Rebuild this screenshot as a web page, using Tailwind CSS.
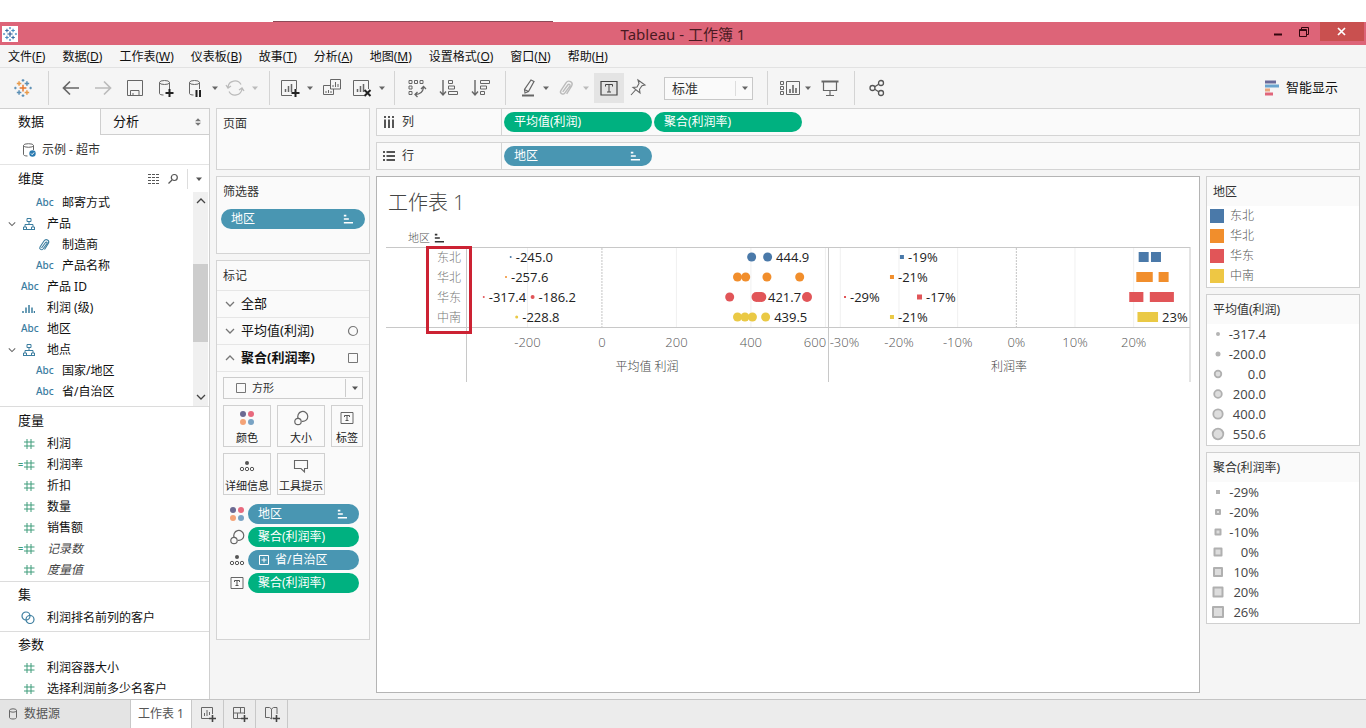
<!DOCTYPE html>
<html lang="zh-CN">
<head>
<meta charset="utf-8">
<title>Tableau - 工作簿 1</title>
<script src="https://cdn.jsdelivr.net/npm/@tailwindcss/browser@4"></script>
</head>
<body class="flex h-screen flex-col overflow-hidden bg-[#f5f5f5] font-['Noto_Sans','Noto_Sans_CJK_SC',sans-serif] text-xs text-[#111]">

<svg class="hidden" aria-hidden="true">
  <symbol id="caret" viewBox="0 0 8 6"><path d="M1 1.5h6L4 5z" fill="currentColor"/></symbol>
  <symbol id="sort" viewBox="0 0 12 12"><path d="M1 2h3M1 6h6M1 10.500h11" stroke="currentColor" stroke-width="2" fill="none"/></symbol>
  <symbol id="hash" viewBox="0 0 12 12"><path d="M4 1v10M8 1v10M1 4h10.500M1 8h10.500" stroke="currentColor" fill="none"/></symbol>
  <symbol id="tree" viewBox="0 0 14 14"><path d="M5 1.500h4v3H5zM7 4.500v3M3 10V7.500h8V10M1.500 10h3v2.500h-3zM9.500 10h3v2.500h-3zM1 12.500h12" stroke="currentColor" fill="none"/></symbol>
  <symbol id="clip" viewBox="0 0 14 14"><path d="M4.500 10 8.500 4.500c.8-1 2.200 0 1.500 1L6 11c-1.300 1.700-4.200 0-3-2L7 3c2-2.800 6-.5 4.300 2.500L7.500 11.500" stroke="currentColor" stroke-width="1.100" fill="none"/></symbol>
  <symbol id="down" viewBox="0 0 10 6"><path d="M1 1l4 4 4-4" stroke="currentColor" stroke-width="1.300" fill="none"/></symbol>
  <symbol id="up" viewBox="0 0 10 6"><path d="M1 5l4-4 4 4" stroke="currentColor" stroke-width="1.300" fill="none"/></symbol>
  <symbol id="colors" viewBox="0 0 16 16"><circle cx="4" cy="4" r="3" fill="#6b6a92"/><circle cx="12" cy="4" r="3" fill="#e8697d"/><circle cx="4" cy="12" r="3" fill="#f4a377"/><circle cx="12" cy="12" r="3" fill="#79a3c4"/></symbol>
  <symbol id="size" viewBox="0 0 16 16"><path d="M5.300 8.700A5 5 0 1 1 9 11.400" stroke="#666" stroke-width="1.200" fill="none"/><circle cx="5" cy="11.500" r="3.200" stroke="#666" stroke-width="1.200" fill="none"/></symbol>
  <symbol id="detail" viewBox="0 0 16 16"><circle cx="8" cy="5" r="2" fill="#555"/><g fill="none" stroke="#555"><circle cx="3" cy="11" r="1.700"/><circle cx="8" cy="11" r="1.700"/><circle cx="13" cy="11" r="1.700"/></g></symbol>
  <symbol id="label" viewBox="0 0 16 16"><path d="M2 2.500h12v11H2z" fill="none" stroke="#666"/><path d="M5.500 7V5.500h5V7M8 5.500v5M6.500 10.500h3" fill="none" stroke="#555"/></symbol>
  <symbol id="tip" viewBox="0 0 16 16"><path d="M1.500 2.500h13v8h-3v3.500L8 10.500H1.500z" fill="none" stroke="#666" stroke-width="1.100"/></symbol>
  <symbol id="cyl" viewBox="0 0 20 20"><path d="M4.500 4.500v11c0 1 2 1.500 4 1.500M14.500 4.500V11" fill="none" stroke="#666"/><ellipse cx="9.500" cy="4.500" rx="5" ry="2" fill="none" stroke="#666"/></symbol>
  <symbol id="mark" viewBox="0 0 16 16"><g stroke-width="1.300"><path d="M8 5v6M5 8h6" stroke="var(--c)"/><path d="M4.500 2v4M2.500 4h4M11.500 10v4M9.500 12h4" stroke="var(--b)"/><path d="M11.500 2v4M9.500 4h4M4.500 10v4M2.500 12h4" stroke="var(--a)"/><path d="M8 0v2.500M6.800 1.200h2.400M8 13.500V16M6.800 14.800h2.400M0 8h2.500M1.200 6.800v2.400M13.500 8H16M14.800 6.800v2.400" stroke="var(--a)" stroke-width="1"/></g></symbol>
</svg>

<div class="flex h-[22px] shrink-0 items-end bg-white"><div class="mx-[20%] h-px w-[280px] bg-[#8d4a58]"></div></div>

<header class="flex h-[23px] shrink-0 items-center bg-[#dd6478]">
  <div class="flex flex-1 pl-0.5"><svg class="size-4 bg-white p-px [--a:#4a8fc0] [--b:#3a6ea5] [--c:#2a5a95]"><use href="#mark"/></svg></div>
  <h1 class="text-[15px] leading-5 text-[#4a1a22]">Tableau - 工作簿 1</h1>
  <div class="flex flex-1 items-start justify-end self-start pr-0.5">
    <button aria-label="最小化" class="flex h-5 w-7 items-center justify-center text-[#33060e]"><svg class="h-3 w-2.5"><path d="M1 8.500h8" stroke="currentColor" stroke-width="2"/></svg></button>
    <button aria-label="还原" class="flex h-5 w-6 items-center justify-center text-[#33060e]"><svg class="size-3" fill="none" stroke="currentColor"><path d="M1.500 3.500h7v7h-7zM1.500 4.500h7M3.500 3V1.500h7v7H9"/></svg></button>
    <button aria-label="关闭" class="ml-1 flex h-[19px] w-11 items-center justify-center bg-[#c9504f] text-white"><svg class="size-2.5"><path d="M1 1l7 7M8 1L1 8" stroke="currentColor" stroke-width="1.700"/></svg></button>
  </div>
</header>

<nav class="flex h-[22px] shrink-0 items-center gap-[17px] px-2 pt-0.5 whitespace-nowrap">
  <button>文件(<u>F</u>)</button><button>数据(<u>D</u>)</button><button>工作表(<u>W</u>)</button><button>仪表板(<u>B</u>)</button><button>故事(<u>T</u>)</button><button>分析(<u>A</u>)</button><button>地图(<u>M</u>)</button><button>设置格式(<u>O</u>)</button><button>窗口(<u>N</u>)</button><button>帮助(<u>H</u>)</button>
</nav>

<div class="flex h-[41px] shrink-0 items-center border-t border-[#e2e2e2] pl-3.5 text-[#666]">
  <button aria-label="开始页"><svg class="size-[18px] [--a:#5b8fb5] [--b:#e89a4a] [--c:#e8762c]"><use href="#mark"/></svg></button>
  <i class="ml-4 h-[34px] w-px bg-[#d4d4d4]"></i>
  <button aria-label="撤消" class="ml-3"><svg class="size-5" fill="none" stroke="currentColor" stroke-width="1.700"><path d="M18 10H3M9 3.500L2.500 10 9 16.500"/></svg></button>
  <button aria-label="重做" class="ml-3 text-[#bbb]"><svg class="size-5" fill="none" stroke="currentColor" stroke-width="1.700"><path d="M2 10h15M11 3.500l6.500 6.500-6.500 6.500"/></svg></button>
  <button aria-label="保存" class="ml-3"><svg class="size-5" fill="none" stroke="currentColor"><path d="M2.500 2.500h15v15h-15zM5.500 17.500v-5h8.500v5M8 17.500v-2.500"/></svg></button>
  <button aria-label="新建数据源" class="ml-2.5"><svg class="size-5"><use href="#cyl"/><path d="M14.500 11v8M10.500 15h8" stroke="#222" stroke-width="2"/></svg></button>
  <button aria-label="暂停自动更新" class="ml-2.5"><svg class="size-5"><use href="#cyl"/><path d="M11.500 12v7M15 12v7" stroke="#222" stroke-width="2"/></svg></button>
  <svg class="ml-1.5 h-1.5 w-2"><use href="#caret"/></svg>
  <button aria-label="刷新" class="ml-1.5 text-[#bbb]"><svg class="size-5" fill="none" stroke="currentColor" stroke-width="1.300"><path d="M3 9a7 7 0 0 1 13-2.500M17 11a7 7 0 0 1-13 2.500M1 7l2 3 3-2M19 13l-2-3-3 2"/></svg></button>
  <svg class="ml-1.5 h-1.5 w-2 text-[#bbb]"><use href="#caret"/></svg>
  <i class="ml-2.5 h-[34px] w-px bg-[#d4d4d4]"></i>
  <button aria-label="新建工作表" class="ml-2.5"><svg class="size-5" fill="none" stroke="currentColor"><path d="M12 17.500H1.500v-15h15V11"/><path d="M5.500 14V11M8.500 14V8M11.500 14V6" stroke-width="1.500"/><path d="M15.500 11v8M11.500 15h8" stroke="#222" stroke-width="2"/></svg></button>
  <svg class="ml-1.5 h-1.5 w-2"><use href="#caret"/></svg>
  <button aria-label="复制" class="ml-2"><svg class="size-5" fill="none" stroke="currentColor"><path d="M8.500 1.500h10v9.500h-10zM8 7.500H1.500v9h10V11M11 9V7M13.500 9V4M16 9V6M4 15v-2M6.500 15v-3M9 15v-2"/></svg></button>
  <button aria-label="清除工作表" class="ml-2.5"><svg class="size-5" fill="none" stroke="currentColor"><path d="M12 17.500H1.500v-15h15V11"/><path d="M5.500 14V11M8.500 14V8M11.500 14V6" stroke-width="1.500"/><path d="M12.500 12l6 6M18.500 12l-6 6" stroke="#222" stroke-width="2"/></svg></button>
  <svg class="ml-1.5 h-1.5 w-2"><use href="#caret"/></svg>
  <i class="ml-2 h-[34px] w-px bg-[#d4d4d4]"></i>
  <button aria-label="交换行和列" class="ml-3"><svg class="size-5" fill="none" stroke="currentColor"><path d="M2 2.500h3v3H2zM7.500 2.500h3v3h-3zM13 2.500h3v3h-3zM2 8h3v3H2zM2 13.500h3v3H2z"/><path d="M8 16.500c5 0 8-3 8.500-7M14 11l2.500-2.500L19 11M10.500 14L8 16.500l2.500 2.500" stroke-width="1.300"/></svg></button>
  <button aria-label="升序排序" class="ml-3"><svg class="size-5" fill="none" stroke="currentColor"><path d="M4 2v15M1 13.500L4 17l3-3.500" stroke-width="1.400"/><path d="M9.500 2.500h4v3h-4zM9.500 8h6v3h-6zM9.500 13.500h9v3h-9z"/></svg></button>
  <button aria-label="降序排序" class="ml-3"><svg class="size-5" fill="none" stroke="currentColor"><path d="M4 2v15M1 13.500L4 17l3-3.500" stroke-width="1.400"/><path d="M9.500 2.500h9v3h-9zM9.500 8h6v3h-6zM9.500 13.500h4v3h-4z"/></svg></button>
  <i class="ml-3.5 h-[34px] w-px bg-[#d4d4d4]"></i>
  <button aria-label="突出显示" class="ml-3"><svg class="size-5" fill="none" stroke="currentColor"><path d="M13 2l3 1.500-5.500 10L7 15l-.5-3.500zM6.500 11.500l4 2" stroke-width="1.200"/><path d="M4 17.500h12" stroke-width="2"/></svg></button>
  <svg class="ml-1 h-1.5 w-2"><use href="#caret"/></svg>
  <button aria-label="分组成员" class="ml-1.5 text-[#bbb]"><svg class="size-5 p-px"><use href="#clip"/></svg></button>
  <svg class="ml-1.5 h-1.5 w-2 text-[#bbb]"><use href="#caret"/></svg>
  <button aria-label="显示标记标签" class="ml-1 flex h-[30px] w-[30px] items-center justify-center bg-[#e4e4e4]"><svg class="size-5" fill="none" stroke="#444"><path d="M2 3.500h16v13.500H2z" stroke-width="1.200"/><path d="M6.500 8.500v-2h7v2M10 6.500v7.500M8 14h4"/></svg></button>
  <button aria-label="固定轴" class="ml-1"><svg class="size-5" fill="none" stroke="currentColor" stroke-width="1.100"><path d="M10 2l7 5-3 .8-2.500 3.500.5 3.700-7-5.500 4-.5L11 5.500zM7.500 12L3 17"/></svg></button>
  <div class="relative ml-4 flex">
    <select aria-label="适合" class="h-[23px] w-[89px] appearance-none border border-[#c8c8c8] bg-[#fafafa] px-[7px] text-[13px] leading-5 text-[#333]"><option>标准</option></select>
    <span class="pointer-events-none absolute inset-y-1 right-0 flex w-[18px] items-center justify-center border-l border-[#ddd]"><svg class="h-1.5 w-2"><use href="#caret"/></svg></span>
  </div>
  <i class="ml-3.5 h-[34px] w-px bg-[#d4d4d4]"></i>
  <button aria-label="显示/隐藏卡" class="ml-3"><svg class="size-5" fill="none" stroke="currentColor"><path d="M.5 3.500h3v3h-3zM.5 8.500h3v3h-3zM.5 13.500h3v3h-3zM6.500 3.500h13v13h-13z"/><path d="M10 15v-4M13 15V7M16 15v-5" stroke-width="1.600"/></svg></button>
  <svg class="ml-1 h-1.5 w-2"><use href="#caret"/></svg>
  <button aria-label="演示模式" class="ml-2"><svg class="size-5" fill="none" stroke="currentColor"><path d="M1.500 3.500h17" stroke-width="2"/><path d="M3.500 4v8.500h13V4M10 12.500v5M6 17.500h8" stroke-width="1.200"/></svg></button>
  <i class="ml-3.5 h-[34px] w-px bg-[#d4d4d4]"></i>
  <button aria-label="共享" class="ml-3"><svg class="size-5" fill="none" stroke="#555" stroke-width="1.300"><circle cx="5.500" cy="10" r="2.500"/><circle cx="14" cy="5" r="2.500"/><circle cx="14" cy="15" r="2.500"/><path d="M7.700 8.700l4-2.400M7.700 11.300l4 2.400"/></svg></button>
  <button class="mr-7 ml-auto flex items-center gap-1.5 text-[13px] text-[#111]"><svg class="size-4"><path d="M1 2h11" stroke="#6a6a9a" stroke-width="3"/><path d="M1 6h14" stroke="#6aa5cf" stroke-width="3"/><path d="M1 10h5" stroke="#eaa57c" stroke-width="3"/><path d="M1 14h8" stroke="#e0657a" stroke-width="3"/></svg>智能显示</button>
</div>

<main class="flex min-h-0 flex-1">
  <aside class="flex w-[210px] shrink-0 flex-col overflow-hidden border-t border-r border-[#cfcfcf] bg-white">
    <div class="flex h-[26px] shrink-0 text-[13px]">
      <button class="w-[100px] pl-[18px] text-left">数据</button>
      <button class="flex flex-1 items-center justify-between border-b border-l border-[#cfcfcf] bg-[#f8f8f8] pr-2 pl-3"><span>分析</span><svg class="h-2 w-1.5" fill="#777"><path d="M0 3.300h6L3 .3zM0 4.700h6l-3 3z"/></svg></button>
    </div>
    <div class="flex h-[30px] shrink-0 items-center gap-1.5 border-b border-[#e4e4e4] pl-[22px] text-[#333]"><svg class="size-3.5" fill="none" stroke="#666"><path d="M1.500 2.500v9c0 .8 1.500 1.500 4 1.500M11.500 2.500V7"/><ellipse cx="6.500" cy="2.500" rx="5" ry="1.800"/><circle cx="10.500" cy="10.500" r="3.200" fill="#2a7ab0" stroke="none"/><path d="M9 10.500l1.200 1.200L12 9.500" stroke="#fff"/></svg>示例 - 超市</div>
    <div class="flex h-[27px] shrink-0 items-center pl-[18px] text-[13px] text-[#111]"><h2 class="flex-1">维度</h2>
      <button aria-label="查看数据" class="mr-1.5"><svg class="h-3 w-3.5" stroke="#555" stroke-dasharray="3 1"><path d="M1 1.500h12M1 4.500h12M1 7.500h12M1 10.500h12"/></svg></button>
      <button aria-label="查找字段" class="mr-2"><svg class="size-3" fill="none" stroke="#555" stroke-width="1.200"><circle cx="7.300" cy="4.500" r="3"/><path d="M5 7L1.500 10.500"/></svg></button>
      <button aria-label="菜单" class="flex h-5 w-[22px] items-center justify-center border-l border-[#ddd] text-[#555]"><svg class="h-1.5 w-2"><use href="#caret"/></svg></button>
    </div>
    <div class="flex h-[215px] shrink-0 border-b border-[#dcdcdc]">
      <ul class="flex-1 [&>li]:flex [&>li]:h-[21px] [&>li]:items-center">
        <li><b class="ml-9 w-[26px] text-[10px] font-medium text-[#3b7d9f]">Abc</b>邮寄方式</li>
        <li><svg class="mr-1.5 ml-2 h-1.5 w-2 text-[#666]"><use href="#down"/></svg><svg class="mr-[11px] size-3.5 text-[#3b7d9f]"><use href="#tree"/></svg>产品</li>
        <li><svg class="mr-[11px] ml-[37px] size-3.5 text-[#3b7d9f]"><use href="#clip"/></svg>制造商</li>
        <li><b class="ml-9 w-[26px] text-[10px] font-medium text-[#3b7d9f]">Abc</b>产品名称</li>
        <li><b class="ml-[21px] w-[26px] text-[10px] font-medium text-[#3b7d9f]">Abc</b>产品 ID</li>
        <li><svg class="mr-3 ml-[22px] h-3 w-[13px]" stroke="#3b7d9f" stroke-width="1.500"><path d="M1 11V9M4 11V5.500M7 11V3M10 11V5.500M12.500 11V9"/></svg>利润 (级)</li>
        <li><b class="ml-[21px] w-[26px] text-[10px] font-medium text-[#3b7d9f]">Abc</b>地区</li>
        <li><svg class="mr-1.5 ml-2 h-1.5 w-2 text-[#666]"><use href="#down"/></svg><svg class="mr-[11px] size-3.5 text-[#3b7d9f]"><use href="#tree"/></svg>地点</li>
        <li><b class="ml-9 w-[26px] text-[10px] font-medium text-[#3b7d9f]">Abc</b>国家/地区</li>
        <li><b class="ml-9 w-[26px] text-[10px] font-medium text-[#3b7d9f]">Abc</b>省/自治区</li>
      </ul>
      <div class="mr-px flex w-[15px] flex-col items-center bg-[#f0f0f0] py-1.5 text-[#444]"><svg class="h-1.5 w-2.5"><use href="#up"/></svg><i class="mt-[60px] h-[78px] w-full bg-[#cdcdcd]"></i><svg class="mt-auto h-1.5 w-2.5"><use href="#down"/></svg></div>
    </div>
    <h2 class="h-[26px] shrink-0 pl-[18px] text-[13px] leading-[26px]">度量</h2>
    <ul class="h-[149px] shrink-0 border-b border-[#dcdcdc] [&_svg]:mr-3 [&_svg]:size-3 [&_svg]:text-[#3f9c7b] [&>li]:flex [&>li]:h-[21px] [&>li]:items-center">
      <li class="pl-[23px]"><svg><use href="#hash"/></svg>利润</li>
      <li class="pl-[18px]"><span class="w-[5px] text-[9px] font-bold text-[#3f9c7b]">=</span><svg><use href="#hash"/></svg>利润率</li>
      <li class="pl-[23px]"><svg><use href="#hash"/></svg>折扣</li>
      <li class="pl-[23px]"><svg><use href="#hash"/></svg>数量</li>
      <li class="pl-[23px]"><svg><use href="#hash"/></svg>销售额</li>
      <li class="pl-[18px] text-[#444]"><span class="w-[5px] text-[9px] font-bold text-[#3f9c7b]">=</span><svg><use href="#hash"/></svg><em>记录数</em></li>
      <li class="pl-[23px] text-[#444]"><svg><use href="#hash"/></svg><em>度量值</em></li>
    </ul>
    <h2 class="h-[25px] shrink-0 pl-[18px] text-[13px] leading-[25px]">集</h2>
    <div class="flex h-[25px] shrink-0 items-center border-b border-[#dcdcdc] pb-0.5 pl-[21px]"><svg class="mr-3 size-3.5" fill="none" stroke="#3b7d9f" stroke-width="1.200"><circle cx="5" cy="5" r="4"/><circle cx="9" cy="8.500" r="4"/></svg>利润排名前列的客户</div>
    <h2 class="h-[25px] shrink-0 pl-[18px] text-[13px] leading-[25px]">参数</h2>
    <ul class="shrink-0 [&_svg]:mr-3 [&_svg]:size-3 [&_svg]:text-[#3f9c7b] [&>li]:flex [&>li]:h-[21px] [&>li]:items-center">
      <li class="pl-[23px]"><svg><use href="#hash"/></svg>利润容器大小</li>
      <li class="pl-[23px]"><svg><use href="#hash"/></svg>选择利润前多少名客户</li>
    </ul>
  </aside>

  <div class="ml-1.5 flex w-[154px] shrink-0 flex-col gap-1.5 text-[#333]">
    <section class="h-[62px] border border-[#d4d4d4] bg-[#fafafa] px-1.5"><h2 class="leading-[29px]">页面</h2></section>
    <section class="h-[78px] border border-[#d4d4d4] bg-[#fafafa] px-1"><h2 class="px-0.5 leading-[29px]">筛选器</h2>
      <div class="mt-[3px] flex h-5 items-center justify-between rounded-full bg-[#4996b2] pr-3 pl-2.5 text-white">地区<svg class="size-2.5"><use href="#sort"/></svg></div>
    </section>
    <section class="h-[380px] border border-[#d4d4d4] bg-[#fafafa]"><h2 class="h-[30px] border-b border-[#e6e6e6] px-1.5 leading-[29px]">标记</h2>
      <button class="flex h-[27px] w-full items-center gap-1.5 border-b border-[#e6e6e6] px-2 text-[13px] text-[#111]"><svg class="h-1.5 w-2.5 text-[#777]"><use href="#down"/></svg>全部</button>
      <button class="flex h-[27px] w-full items-center gap-1.5 border-b border-[#e6e6e6] px-2 text-[13px] text-[#111]"><svg class="h-1.5 w-2.5 text-[#777]"><use href="#down"/></svg>平均值(利润)<svg class="mr-0.5 ml-auto size-3" fill="none" stroke="#777" stroke-width="1.200"><circle cx="6" cy="6" r="4.500"/></svg></button>
      <button class="flex h-[27px] w-full items-center gap-1.5 border-b border-[#e6e6e6] px-2 text-[13px] font-bold text-[#111]"><svg class="h-1.5 w-2.5 text-[#777]"><use href="#up"/></svg>聚合(利润率)<svg class="mr-0.5 ml-auto size-3" fill="none" stroke="#777"><path d="M1.500 1.500h9v9h-9z"/></svg></button>
      <div class="px-1.5 pt-[5px] text-[#222]">
        <div class="relative flex items-center">
          <select aria-label="标记类型" class="h-[22px] w-full appearance-none border border-[#ccc] bg-[#fafafa] pl-7 text-[11px] text-[#333]"><option>方形</option></select>
          <svg class="pointer-events-none absolute left-3 size-3" fill="none" stroke="#777"><path d="M1.500 1.500h9v9h-9z"/></svg>
          <span class="pointer-events-none absolute inset-y-0.5 right-0 flex w-[18px] items-center justify-center border-l border-[#ccc] text-[#555]"><svg class="h-1.5 w-2"><use href="#caret"/></svg></span>
        </div>
        <div class="mt-1.5 grid grid-cols-[48px_48px_32px] gap-1.5 text-[11px] leading-4 whitespace-nowrap [&_svg]:size-4 [&>button]:flex [&>button]:h-[42px] [&>button]:flex-col [&>button]:items-center [&>button]:justify-between [&>button]:border [&>button]:border-[#d0d0d0] [&>button]:pt-1">
          <button><svg><use href="#colors"/></svg>颜色</button>
          <button><svg><use href="#size"/></svg>大小</button>
          <button><svg><use href="#label"/></svg>标签</button>
          <button><svg><use href="#detail"/></svg>详细信息</button>
          <button><svg><use href="#tip"/></svg>工具提示</button>
        </div>
        <ul class="mt-[9px] flex flex-col gap-[3px] pr-1 pl-1.5 text-white [&>li]:flex [&>li]:items-center [&>li]:gap-[3px]">
          <li><svg class="size-4"><use href="#colors"/></svg><div class="flex h-5 flex-1 items-center justify-between rounded-full bg-[#4996b2] pr-3 pl-2.5">地区<svg class="size-2.5"><use href="#sort"/></svg></div></li>
          <li><svg class="size-4"><use href="#size"/></svg><div class="flex h-5 flex-1 items-center rounded-full bg-[#00b180] pl-2.5">聚合(利润率)</div></li>
          <li><svg class="size-4"><use href="#detail"/></svg><div class="flex h-5 flex-1 items-center gap-1.5 rounded-full bg-[#4996b2] pl-[11px]"><svg class="size-2.5" fill="none" stroke="#fff"><path d="M.5 .5h9v9h-9zM5 2.500v5M2.500 5h5"/></svg>省/自治区</div></li>
          <li><svg class="size-4"><use href="#label"/></svg><div class="flex h-5 flex-1 items-center rounded-full bg-[#00b180] pl-2.5">聚合(利润率)</div></li>
        </ul>
      </div>
    </section>
  </div>

  <div class="mr-1.5 mb-1.5 ml-1.5 flex min-w-0 flex-1 flex-col gap-1.5 text-[#333]">
    <div class="flex h-7 shrink-0 items-center border border-[#d4d4d4] bg-[#fafafa]">
      <h2 class="flex w-[125px] items-center gap-[7px] self-stretch border-r border-[#d4d4d4] pl-1.5"><svg class="size-3" stroke="#555" stroke-width="2"><path d="M2 0v2M2 3.500V12M6 0v2M6 3.500V12M10 0v2M10 3.500V12"/></svg>列</h2>
      <div class="ml-0.5 flex h-5 w-[148px] items-center rounded-full bg-[#00b180] pl-2.5 text-white">平均值(利润)</div>
      <div class="ml-0.5 flex h-5 w-[148px] items-center rounded-full bg-[#00b180] pl-2.5 text-white">聚合(利润率)</div>
    </div>
    <div class="flex h-7 shrink-0 items-center border border-[#d4d4d4] bg-[#fafafa]">
      <h2 class="flex w-[125px] items-center gap-[7px] self-stretch border-r border-[#d4d4d4] pl-1.5"><svg class="size-3" stroke="#555" stroke-width="2"><path d="M0 2h2M3.500 2H12M0 6h2M3.500 6H12M0 10h2M3.500 10H12"/></svg>行</h2>
      <div class="ml-0.5 flex h-5 w-[148px] items-center justify-between rounded-full bg-[#4996b2] pr-3 pl-2.5 text-white">地区<svg class="size-2.5"><use href="#sort"/></svg></div>
    </div>
    <div class="flex min-h-0 flex-1 gap-1.5">
      <section class="min-w-0 flex-1 border border-[#b4b4b4] bg-white px-[9px] font-['Open_Sans','Noto_Sans_CJK_SC',sans-serif]">
        <h2 class="mt-2.5 ml-0.5 h-8 text-xl leading-8 font-light text-[#444]">工作表 1</h2>
        <div class="mt-2.5 ml-[22px] flex h-[18px] items-center gap-1 text-[11px] font-light text-[#555]">地区<svg class="size-2.5 text-[#333]"><use href="#sort"/></svg></div>
        <div class="flex">
          <div class="relative w-20 shrink-0 font-light text-[#777]">
            <ul class="h-[81px] border-y border-[#c8c8c8] pr-[5px] text-right leading-5"><li>东北</li><li>华北</li><li>华东</li><li>中南</li></ul>
            <div class="absolute -top-px -right-1.5 h-[88px] w-[46px] border-3 border-[#cc2233]"></div>
          </div>
          <svg id="profit" role="img" aria-label="平均值 利润" class="h-[135px] min-w-0 flex-1 overflow-visible text-[13px]"></svg>
          <svg id="ratio" role="img" aria-label="利润率" class="h-[135px] min-w-0 flex-1 overflow-visible text-[13px]"></svg>
        </div>
      </section>

      <div class="flex w-[154px] shrink-0 flex-col gap-1.5">
        <section class="border border-[#d0d0d0] bg-white pb-px"><h2 class="bg-[#fafafa] pl-1.5 leading-[29px]">地区</h2>
          <ul class="pl-[3px] font-light text-[#555] [&_i]:size-3.5 [&>li]:flex [&>li]:h-5 [&>li]:items-center [&>li]:gap-1.5">
            <li><i class="bg-[#4a79a9]"></i>东北</li><li><i class="bg-[#f18e2c]"></i>华北</li><li><i class="bg-[#e15558]"></i>华东</li><li><i class="bg-[#eec744]"></i>中南</li>
          </ul></section>
        <section class="border border-[#d0d0d0] bg-white pb-px"><h2 class="bg-[#fafafa] pl-1.5 leading-[29px]">平均值(利润)</h2>
          <ul class="pl-[3px] font-['Open_Sans',sans-serif] text-[13px] leading-5 text-[#444] [&_span]:w-10 [&_span]:text-right [&_svg]:size-4 [&>li]:flex [&>li]:items-center">
            <li><svg><circle cx="8" cy="8" r="2" fill="#b4b4b4"/></svg><span>-317.4</span></li>
            <li><svg><circle cx="8" cy="8" r="2.500" fill="#b4b4b4"/></svg><span>-200.0</span></li>
            <li><svg><circle cx="8" cy="8" r="3.300" fill="#ddd" stroke="#b0b0b0" stroke-width="1.800"/></svg><span>0.0</span></li>
            <li><svg><circle cx="8" cy="8" r="3.800" fill="#ddd" stroke="#b0b0b0" stroke-width="1.800"/></svg><span>200.0</span></li>
            <li><svg><circle cx="8" cy="8" r="4.700" fill="#ddd" stroke="#b0b0b0" stroke-width="1.800"/></svg><span>400.0</span></li>
            <li><svg><circle cx="8" cy="8" r="5.300" fill="#ddd" stroke="#b0b0b0" stroke-width="1.800"/></svg><span>550.6</span></li>
          </ul></section>
        <section class="border border-[#d0d0d0] bg-white pb-px"><h2 class="bg-[#fafafa] pl-1.5 leading-[29px]">聚合(利润率)</h2>
          <ul class="pl-[3px] font-['Open_Sans',sans-serif] text-[13px] leading-5 text-[#444] [&_span]:w-[33px] [&_span]:text-right [&_svg]:size-4 [&>li]:flex [&>li]:items-center">
            <li><svg><path d="M6 6h4v4H6z" fill="#b4b4b4"/></svg><span>-29%</span></li>
            <li><svg fill="#ddd" stroke="#b0b0b0" stroke-width="2" stroke-linejoin="round"><path d="M6 6h4v4H6z"/></svg><span>-20%</span></li>
            <li><svg fill="#ddd" stroke="#b0b0b0" stroke-width="2" stroke-linejoin="round"><path d="M5.500 5.500h5v5h-5z"/></svg><span>-10%</span></li>
            <li><svg fill="#ddd" stroke="#b0b0b0" stroke-width="2" stroke-linejoin="round"><path d="M4.500 4.500h7v7h-7z"/></svg><span>0%</span></li>
            <li><svg fill="#ddd" stroke="#b0b0b0" stroke-width="2" stroke-linejoin="round"><path d="M4 4h8v8H4z"/></svg><span>10%</span></li>
            <li><svg fill="#ddd" stroke="#b0b0b0" stroke-width="2" stroke-linejoin="round"><path d="M3.500 3.500h9v9h-9z"/></svg><span>20%</span></li>
            <li><svg fill="#ddd" stroke="#b0b0b0" stroke-width="2" stroke-linejoin="round"><path d="M3 3h10v10H3z"/></svg><span>26%</span></li>
          </ul></section>
      </div>
    </div>
  </div>
</main>

<footer class="flex h-[29px] shrink-0 border-t border-[#c4c4c4] bg-[#ececec] text-[#555] [&>button]:flex [&>button]:items-center [&>button]:border-r [&>button]:border-[#c8c8c8]">
  <button class="w-[131px] gap-1.5 bg-[#e4e4e4] pl-2"><svg class="h-3 w-2.5" fill="none" stroke="#666"><path d="M1.500 2.500v7c0 2 7 2 7 0v-7"/><ellipse cx="5" cy="2.500" rx="3.500" ry="1.700"/></svg>数据源</button>
  <button class="w-[61px] justify-center bg-white whitespace-nowrap">工作表 1</button>
  <button aria-label="新建工作表" class="w-8 justify-center"><svg class="size-4" fill="none" stroke="#666"><path d="M9 12.500H1.500v-11h11V8M4.500 10V7M7 10V4M9.500 9V6"/><path d="M12.500 9v7M9 12.500h7" stroke="#444" stroke-width="1.600"/></svg></button>
  <button aria-label="新建仪表板" class="w-8 justify-center"><svg class="size-4" fill="none" stroke="#666"><path d="M9 12.500H1.500v-11h11V8M1.500 7h11M5.500 7v5.500M8.500 1.500V7"/><path d="M12.500 9v7M9 12.500h7" stroke="#444" stroke-width="1.600"/></svg></button>
  <button aria-label="新建故事" class="w-8 justify-center"><svg class="size-4" fill="none" stroke="#666"><path d="M9 11.500L7.500 13 5.500 11.500h-4v-10h4L7.500 3 9.500 1.500h3.500V8M7.500 3v10"/><path d="M12.500 9v7M9 12.500h7" stroke="#444" stroke-width="1.600"/></svg></button>
</footer>

<script>
const colors = ['#4a79a9', '#f18e2c', '#e15558', '#eac945'];

// marks: one list per region, each [value, size, optional label]
const profit = {
  id: 'profit', min: -365, max: 607, title: '平均值 利润', shape: 'circle',
  ticks: [[-200, '-200'], [0, '0'], [200, '200'], [400, '400'], [600, '600', 572]],
  marks: [
    [[-245, 2, '-245.0'], [402, 9], [444.9, 9, '444.9']],
    [[-257.6, 2, '-257.6'], [364, 9], [386, 9], [443, 9], [531, 9]],
    [[-317.4, 2, '-317.4'], [-186.2, 4, '-186.2'], [343, 9], [415, 10], [428, 10], [421.7, 10, '421.7'], [550.6, 10]],
    [[-228.8, 3, '-228.8'], [364, 9], [384, 9], [404, 9], [439.5, 9, '439.5']]
  ]
};
const ratio = {
  id: 'ratio', min: -32.1, max: 29.6, title: '利润率', shape: 'rect', last: true,
  ticks: [[-30, '-30%', -29.3], [-20, '-20%'], [-10, '-10%'], [0, '0%'], [10, '10%'], [20, '20%']],
  marks: [
    [[-19.5, 4, '-19%'], [21.7, 10], [23.8, 10]],
    [[-21.2, 4, '-21%'], [21.3, 10], [22.4, 10], [25.1, 10]],
    [[-29.2, 2, '-29%'], [-16.5, 5, '-17%'], [20.1, 10], [20.8, 10], [23.6, 10], [24.8, 10], [26, 10]],
    [[-21.2, 4, '-21%'], [21.5, 10], [22.4, 10], [23.3, 10, '23%']]
  ]
};

function draw(c) {
  const x = v => ((v - c.min) / (c.max - c.min) * 100).toFixed(2) + '%';
  let s = '';
  for (const [v, t, at] of c.ticks) {
    s += `<line x1="${x(v)}" x2="${x(v)}" y1="1" y2="80" stroke="${v ? '#f0f0f0' : '#c4c4c4'}"${v ? '' : ' stroke-dasharray="2 1"'}/>`;
    s += `<text x="${x(at ?? v)}" y="100" text-anchor="middle" class="fill-[#555] font-light">${t}</text>`;
  }
  c.marks.forEach((row, i) => {
    const y = 10 + i * 20;
    for (const [v, d, t] of row) {
      s += c.shape === 'circle'
        ? `<circle cx="${x(v)}" cy="${y}" r="${d / 2}" fill="${colors[i]}"/>`
        : `<svg x="${x(v)}" y="${y}" class="overflow-visible"><rect x="${-d / 2}" y="${-d / 2}" width="${d}" height="${d}" fill="${colors[i]}"/></svg>`;
      if (t) s += `<text x="${x(v)}" dx="${d / 2 + 4}" y="${y + 5}" class="fill-[#222]">${t}</text>`;
    }
  });
  s += `<text x="50%" y="124" text-anchor="middle" class="fill-[#444] text-xs font-light">${c.title}</text>`;
  s += '<path d="M.5 0v135" stroke="#c8c8c8"/><line x2="100%" y1=".5" y2=".5" stroke="#c8c8c8"/><line x2="100%" y1="80.5" y2="80.5" stroke="#c8c8c8"/>';
  if (c.last) s += '<line x1="100%" x2="100%" y2="135" stroke="#c8c8c8"/>';
  document.getElementById(c.id).innerHTML = s;
}
draw(profit);
draw(ratio);
</script>
</body>
</html>
